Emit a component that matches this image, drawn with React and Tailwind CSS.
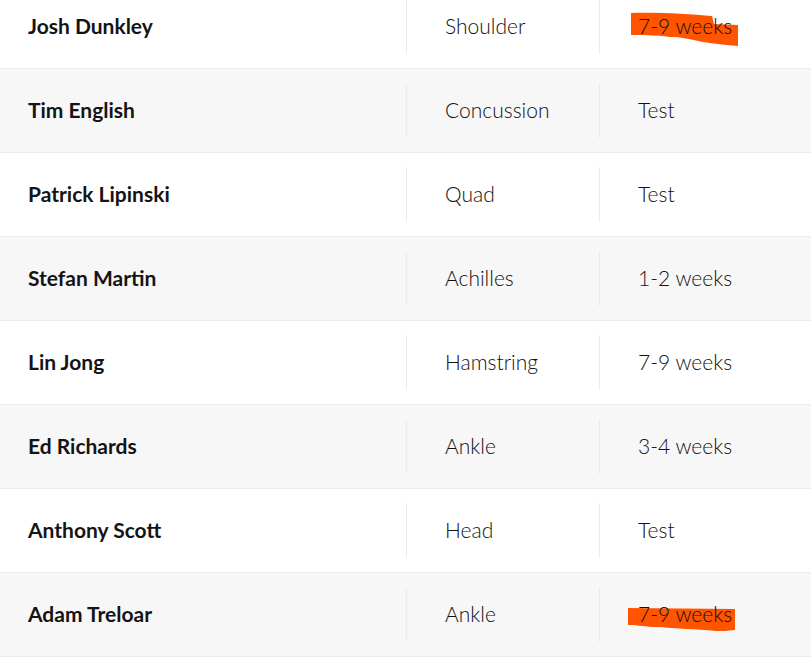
const rows = [
  { name: "Josh Dunkley", injury: "Shoulder", time: "7-9 weeks", mark: "top" },
  { name: "Tim English", injury: "Concussion", time: "Test" },
  { name: "Patrick Lipinski", injury: "Quad", time: "Test" },
  { name: "Stefan Martin", injury: "Achilles", time: "1-2 weeks" },
  { name: "Lin Jong", injury: "Hamstring", time: "7-9 weeks" },
  { name: "Ed Richards", injury: "Ankle", time: "3-4 weeks" },
  { name: "Anthony Scott", injury: "Head", time: "Test" },
  { name: "Adam Treloar", injury: "Ankle", time: "7-9 weeks", mark: "bottom" },
];

// hand-drawn highlighter scribbles, coords relative to the row box
const marks = {
  top: "M631,28 C655,27 690,29 712,31 L714,39 L738,40 L738,61 C722,60 712,58 703,57 C690,54 680,52 670,52 C655,50 642,50 631,50 Z",
  bottom: "M628,35 L735,36 L735,57 C728,58 722,58 716,58 C705,57 696,56 687,56 C672,55 662,54 653,54 C642,53 635,52 628,52 Z",
};

function Row({ row, shaded }) {
  return (
    <div
      className={`relative flex h-[84px] border-b border-[#ebebeb] ${
        shaded ? "bg-[#f7f7f7]" : "bg-white"
      }`}
    >
      {row.mark && (
        <svg
          className="absolute left-0 top-0"
          width="811"
          height="83"
          viewBox="0 0 811 83"
        >
          <path d={marks[row.mark]} fill="#ff5500" />
        </svg>
      )}
      <div className="relative flex w-[406px] items-center pb-[2px] pl-[28px] text-[21px] font-bold text-[#141414]">
        {row.name}
      </div>
      <div className="relative py-[14px]">
        <div className="flex h-[55px] w-[193px] items-center border-l border-[#ebebeb] pb-[2px] pl-[38px] text-[21px] font-light text-[#111]">
          {row.injury}
        </div>
      </div>
      <div className="relative flex-1 py-[14px]">
        <div className="flex h-[55px] items-center border-l border-[#ebebeb] pb-[2px] pl-[38px] text-[21px] font-light text-[#111]">
          {row.time}
        </div>
      </div>
    </div>
  );
}

export default function App() {
  return (
    <div
      className="h-[658px] w-[811px] overflow-hidden bg-white"
      style={{ fontFamily: "Lato, 'Open Sans', sans-serif" }}
    >
      <div className="-mt-[15px]">
        {rows.map((row, i) => (
          <Row key={row.name} row={row} shaded={i % 2 === 1} />
        ))}
      </div>
    </div>
  );
}
